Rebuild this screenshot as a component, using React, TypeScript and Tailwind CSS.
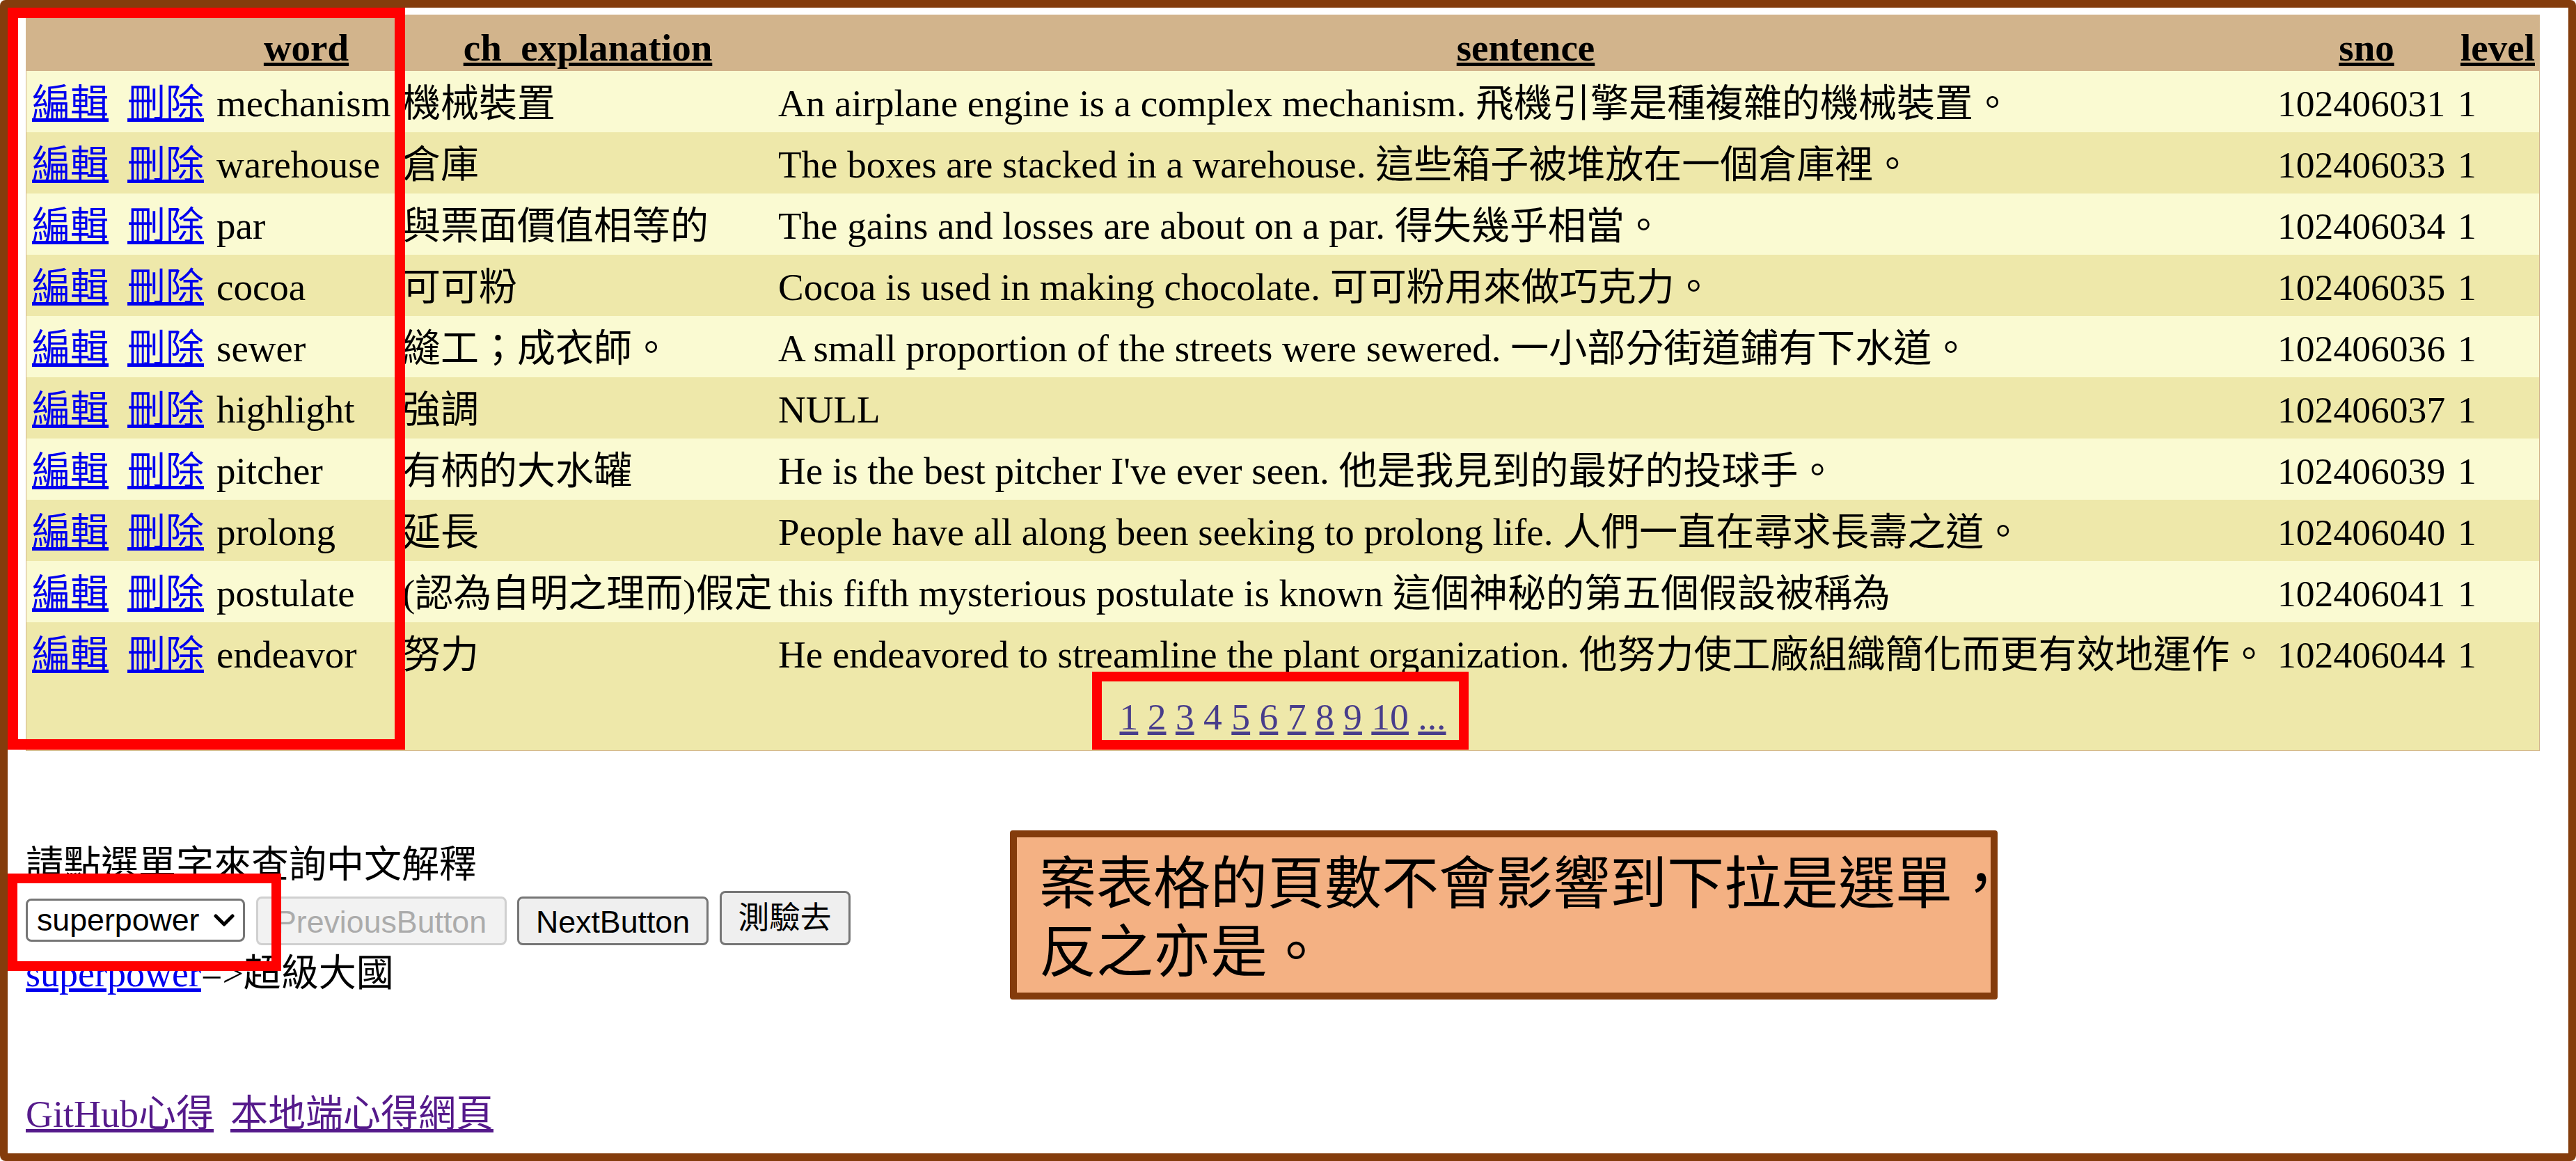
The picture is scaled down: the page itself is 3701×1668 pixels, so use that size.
import React from 'react'

const cols = 'grid grid-cols-[266px_272px_537px_2158px_258px_119px]'

const rows = [
  ['mechanism', '機械裝置', 'An airplane engine is a complex mechanism. 飛機引擎是種複雜的機械裝置。', '102406031'],
  ['warehouse', '倉庫', 'The boxes are stacked in a warehouse. 這些箱子被堆放在一個倉庫裡。', '102406033'],
  ['par', '與票面價值相等的', 'The gains and losses are about on a par. 得失幾乎相當。', '102406034'],
  ['cocoa', '可可粉', 'Cocoa is used in making chocolate. 可可粉用來做巧克力。', '102406035'],
  ['sewer', '縫工；成衣師。', 'A small proportion of the streets were sewered. 一小部分街道鋪有下水道。', '102406036'],
  ['highlight', '強調', 'NULL', '102406037'],
  ['pitcher', '有柄的大水罐', "He is the best pitcher I've ever seen. 他是我見到的最好的投球手。", '102406039'],
  ['prolong', '延長', 'People have all along been seeking to prolong life. 人們一直在尋求長壽之道。', '102406040'],
  ['postulate', '(認為自明之理而)假定', 'this fifth mysterious postulate is known 這個神秘的第五個假設被稱為', '102406041'],
  ['endeavor', '努力', 'He endeavored to streamline the plant organization. 他努力使工廠組織簡化而更有效地運作。', '102406044'],
]

const pages = ['1', '2', '3', '4', '5', '6', '7', '8', '9', '10', '...']

function Chevron() {
  return (
    <svg width="30" height="19" viewBox="0 0 30 19" fill="none">
      <path d="M3 3 L15 15 L27 3" stroke="#000" strokeWidth="5" strokeLinecap="round" strokeLinejoin="round" />
    </svg>
  )
}

export default function App() {
  return (
    <div className="relative w-[3701px] h-[1668px] border-[11px] border-[#843C0C] rounded-[8px] bg-white overflow-hidden text-black font-['Liberation_Serif','Noto_Sans_CJK_TC',serif]">
      <div className="pl-[26px] pt-[10px]">
        {/* GridView */}
        <div className="w-[3612px] border border-[#D2B48C] text-[55px] whitespace-nowrap">
          <div className={`${cols} h-[80px] bg-[#D2B48C] font-bold`}>
            <div />
            {['word', 'ch_explanation', 'sentence', 'sno', 'level'].map((h) => (
              <div key={h} className="flex items-center justify-center pt-[6px]">
                <span className="underline">{h}</span>
              </div>
            ))}
          </div>

          {rows.map((r, i) => (
            <div
              key={r[3]}
              className={`${cols} h-[88px] pt-[6px] ${i % 2 === 0 ? 'bg-[#FAFAD2]' : 'bg-[#EEE8AA]'}`}
            >
              <div className="flex items-center pl-[8px]">
                <span className="text-[#0000EE] underline">編輯</span>
                <span className="ml-[27px] text-[#0000EE] underline">刪除</span>
              </div>
              <div className="flex items-center pl-[7px]">{r[0]}</div>
              <div className="flex items-center pl-[2px]">{r[1]}</div>
              <div className="flex items-center pl-[5px]">{r[2]}</div>
              <div className="flex items-center pl-[1px] text-[53.6px]">{r[3]}</div>
              <div className="flex items-center pl-[2px] text-[53.6px]">1</div>
            </div>
          ))}

          <div className="h-[96px] bg-[#EEE8AA] flex items-center justify-center text-[#483D8B] text-[53.6px]">
            <span>
              {pages.map((p, i) => (
                <React.Fragment key={p}>
                  {i > 0 && ' '}
                  {p === '4' ? <span>{p}</span> : <span className="underline">{p}</span>}
                </React.Fragment>
              ))}
            </span>
          </div>
        </div>

        {/* dropdown area */}
        <p className="mt-[133px] h-[62px] leading-[62px] text-[54px]">請點選單字來查詢中文解釋</p>

        <div className="mt-[6px] h-[78px] flex items-end gap-[15.5px] font-['Liberation_Sans','Noto_Sans_CJK_TC',sans-serif] text-[44.7px]">
          <div className="mb-[5px] w-[315px] h-[62px] border-[3px] border-[#767676] rounded-[8px] bg-white flex items-center justify-between pl-[13px] pr-[12px]">
            <span>superpower</span>
            <Chevron />
          </div>
          <button className="w-[360px] h-[70px] border-[3px] border-[#D0D0D0] rounded-[8px] bg-[#F2F2F2] text-[#ABABAB]">
            PreviousButton
          </button>
          <button className="w-[275px] h-[70px] border-[3px] border-[#767676] rounded-[8px] bg-[#EFEFEF]">
            NextButton
          </button>
          <button className="w-[188px] h-[78px] border-[3px] border-[#767676] rounded-[8px] bg-[#EFEFEF]">
            測驗去
          </button>
        </div>

        <p className="mt-[10px] h-[62px] leading-[62px] text-[54px]">
          <span className="text-[#0000EE] underline">superpower</span>=&gt;超級大國
        </p>

        <p className="mt-[140px] h-[62px] leading-[62px] text-[54px] text-[#551A8B]">
          <span className="underline">GitHub心得</span>
          <span className="ml-[24px] underline">本地端心得網頁</span>
        </p>
      </div>

      {/* annotations */}
      <div className="absolute left-0 top-0 w-[571px] h-[1066px] border-[15px] border-[#FF0000]" />
      <div className="absolute left-[1558px] top-[954px] w-[541px] h-[112px] border-[14px] border-[#FF0000]" />
      <div className="absolute left-0 top-[1244px] w-[393px] h-[140px] border-[14px] border-[#FF0000]" />

      <div className="absolute left-[1440px] top-[1182px] w-[1419px] h-[243px] border-[10px] border-[#843C0C] rounded-[4px] bg-[#F4B183] pl-[32px] pt-[11px] text-[82px] leading-[98px] whitespace-nowrap font-['Noto_Sans_CJK_TC',sans-serif]">
        <div className="h-[98px]">案表格的頁數不會影響到下拉是選單，</div>
        <div className="h-[98px]">反之亦是。</div>
      </div>
    </div>
  )
}
